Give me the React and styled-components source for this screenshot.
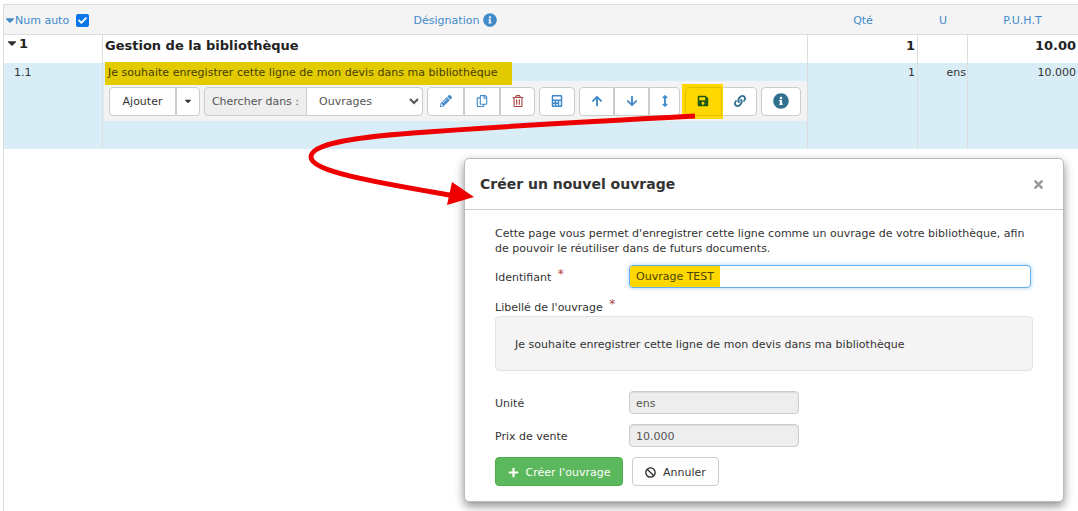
import React from "react";
import styled, { createGlobalStyle } from "styled-components";
import {
  FaArrowDown,
  FaArrowUp,
  FaArrowsAltV,
  FaBan,
  FaCalculator,
  FaCaretDown,
  FaCheck,
  FaInfoCircle,
  FaLink,
  FaPencilAlt,
  FaPlus,
  FaRegCopy,
  FaRegTrashAlt,
  FaSave,
  FaTimes
} from "react-icons/fa";

const GlobalStyle = createGlobalStyle`
  html, body {
    margin: 0;
    padding: 0;
    background: #fff;
    overflow: hidden;
  }
  body {
    font-family: "DejaVu Sans", Verdana, sans-serif;
    font-size: 11px;
    color: #333;
  }
  * {
    box-sizing: border-box;
  }
`;

const Page = styled.div`
  position: relative;
  width: 1078px;
  height: 511px;
  padding: 4px 0 0 3px;
  overflow: hidden;
`;

const Table = styled.div`
  width: 1075px;
  height: 507px;
  border-left: 1px solid #ddd;
  border-top: 1px solid #ddd;
`;

const Row = styled.div`
  display: grid;
  grid-template-columns: 99px 705px 110px 50px 109px;
  height: ${(p) => p.$height}px;
  background: ${(p) => p.$bg || "#fff"};
  border-bottom: ${(p) => (p.$line ? "1px solid #ddd" : "0")};
`;

const HeadCell = styled.div`
  display: flex;
  align-items: center;
  justify-content: ${(p) => p.$justify || "center"};
  gap: 4px;
  padding-top: 1px;
  color: #428bca;
  font-size: 11px;
`;

const Cell = styled.div`
  padding: ${(p) => p.$padding || "2px 1px 0 0"};
  text-align: ${(p) => p.$align || "right"};
  border-right: ${(p) => (p.$noLine ? "0" : "1px solid #ddd")};
  font-weight: ${(p) => (p.$bold ? 700 : 400)};
  font-size: ${(p) => (p.$bold ? "13px" : "11px")};
  color: ${(p) => (p.$bold ? "#222" : "#333")};
  min-width: 0;
`;

const Caret = styled.span`
  display: inline-flex;
  color: ${(p) => p.$color};
  font-size: ${(p) => p.$size || 12}px;
`;

const NumLabel = styled.span`
  display: flex;
  align-items: center;
  margin-left: -1px;
  ${Caret} {
    margin-right: -2px;
  }
`;

const NumberCell = styled(Cell)`
  display: flex;
  justify-content: flex-start;
  align-items: flex-start;
  padding: 1px 0 0 1px;
`;

const Checkbox = styled.span`
  display: inline-flex;
  align-items: center;
  justify-content: center;
  width: 13px;
  height: 13px;
  margin-left: 3px;
  border-radius: 2px;
  background: #0b76e8;
  color: #fff;
  font-size: 9px;
`;

const LineText = styled.mark`
  position: relative;
  z-index: 1;
  display: block;
  width: 407px;
  height: 23px;
  margin: -1px 0 0 2px;
  padding: 4px 0 0 3px;
  background: #e2cb00;
  color: #463c00;
  letter-spacing: 0.03px;
  white-space: nowrap;
`;

const Toolbar = styled.div`
  display: flex;
  align-items: center;
  height: 40px;
  margin: -4px 0 0 1px;
  padding: 0 5px;
  width: 703px;
  background: #f3f3f3;
  border-radius: 3px;
`;

const Group = styled.div`
  display: flex;
  height: 29px;
  margin-left: ${(p) => p.$gap || 0}px;
`;

const ToolButton = styled.button`
  position: relative;
  display: flex;
  align-items: center;
  justify-content: center;
  width: ${(p) => p.$width}px;
  height: 100%;
  padding: 0;
  background: #fff;
  border: 1px solid #ccc;
  color: ${(p) => p.$color || "#428bca"};
  font-family: inherit;
  font-size: ${(p) => p.$size || 12}px;
  &:first-child {
    border-radius: 4px 0 0 4px;
  }
  &:last-child {
    border-radius: 0 4px 4px 0;
  }
  &:only-child {
    border-radius: 4px;
  }
`;

const Highlight = styled.span`
  position: absolute;
  z-index: 1;
  inset: -4px -2px -4px -4px;
  background: #ffd800;
  display: flex;
  align-items: center;
  justify-content: center;
  color: #1d5a10;
  &::after {
    content: "";
    position: absolute;
    inset: 3px 1px 3px 3px;
    border: 1px solid #e0bf00;
    border-radius: 4px 0 0 4px;
  }
`;

const AddonLabel = styled.span`
  display: flex;
  align-items: center;
  justify-content: center;
  width: 103px;
  background: #eee;
  border: 1px solid #ccc;
  border-radius: 4px 0 0 4px;
  color: #555;
`;

const SearchSelect = styled.select`
  width: 117px;
  height: 100%;
  margin-left: -1px;
  padding: 0 0 0 8px;
  background: #fff;
  border: 1px solid #ccc;
  border-radius: 0 4px 4px 0;
  color: #555;
  font-family: inherit;
  font-size: 11px;
`;

const Arrow = styled.svg`
  position: absolute;
  top: 0;
  left: 0;
  z-index: 3;
  pointer-events: none;
`;

const Modal = styled.section`
  position: absolute;
  top: 158px;
  left: 464px;
  z-index: 2;
  width: 600px;
  height: 344px;
  background: #fff;
  border: 1px solid #bbb;
  border-radius: 5px;
  box-shadow: 0 4px 10px rgba(0, 0, 0, 0.45);
`;

const ModalHeader = styled.header`
  display: flex;
  align-items: center;
  justify-content: space-between;
  height: 51px;
  padding: 0 18px 0 15px;
  border-bottom: 1px solid #ccc;
`;

const ModalTitle = styled.h4`
  margin: 0;
  font-size: 14px;
  font-weight: 700;
  color: #333;
`;

const Close = styled.span`
  display: flex;
  color: #999;
  font-size: 13px;
`;

const ModalBody = styled.div`
  padding: 16px 30px 0;
`;

const Intro = styled.p`
  margin: 0 0 9px;
  line-height: 15px;
`;

const FormRow = styled.div`
  display: flex;
  align-items: center;
  height: ${(p) => p.$height || 23}px;
  margin-bottom: ${(p) => p.$mb || 0}px;
`;

const Label = styled.label`
  width: 134px;
  padding-top: 1px;
`;

const Star = styled.sup`
  position: relative;
  top: 2px;
  margin-left: 3px;
  color: #a94442;
  font-size: 12px;
  line-height: 0;
`;

const Field = styled.div`
  display: flex;
  align-items: center;
  width: ${(p) => p.$width}px;
  height: ${(p) => p.$height || 23}px;
  border: 1px solid ${(p) => (p.$focus ? "#66afe9" : "#ccc")};
  border-radius: 4px;
  background: ${(p) => (p.$focus ? "#fff" : "#eee")};
  box-shadow: ${(p) =>
    p.$focus ? "0 0 4px rgba(102, 175, 233, 0.6)" : "inset 0 1px 1px rgba(0,0,0,.08)"};
  padding: ${(p) => (p.$focus ? "0" : "1px 0 0 6px")};
  color: #555;
`;

const FieldMark = styled.span`
  display: flex;
  align-items: center;
  height: 100%;
  padding: 0 6px;
  min-width: 90px;
  background: #ffd800;
  border-radius: 3px 0 0 3px;
  color: #4b4300;
  white-space: nowrap;
`;

const StackLabel = styled.div`
  margin: 13px 0 -1px;
  height: 16px;
`;

const TextBlock = styled.div`
  display: flex;
  align-items: center;
  height: 55px;
  width: 538px;
  margin-bottom: 20px;
  padding: 1px 19px 0;
  background: #f4f4f4;
  border: 1px solid #e3e3e3;
  border-radius: 4px;
  letter-spacing: 0.03px;
`;

const Actions = styled.div`
  display: flex;
  gap: 9px;
  margin-top: 10px;
`;

const ActionButton = styled.button`
  display: flex;
  align-items: center;
  justify-content: center;
  gap: 7px;
  width: ${(p) => p.$width}px;
  height: 29px;
  padding: 1px 0 0;
  border: 1px solid ${(p) => (p.$primary ? "#4cae4c" : "#ccc")};
  border-radius: 4px;
  background: ${(p) => (p.$primary ? "#5cb85c" : "#fff")};
  color: ${(p) => (p.$primary ? "#fff" : "#333")};
  font-family: inherit;
  font-size: 11px;
`;

export default function App() {
  return (
    <Page>
      <GlobalStyle />
      <Table>
        <Row $height={30} $bg="#f4f4f4" $line>
          <HeadCell $justify="flex-start">
            <NumLabel>
              <Caret $color="#428bca" $size={14}>
                <FaCaretDown />
              </Caret>
              Num auto
            </NumLabel>
            <Checkbox>
              <FaCheck />
            </Checkbox>
          </HeadCell>
          <HeadCell>
            Désignation
            <Caret $color="#428bca" $size={14}>
              <FaInfoCircle />
            </Caret>
          </HeadCell>
          <HeadCell>Qté</HeadCell>
          <HeadCell>U</HeadCell>
          <HeadCell>P.U.H.T</HeadCell>
        </Row>
        <Row $height={28}>
          <NumberCell $bold>
            <Caret $color="#333" $size={14}>
              <FaCaretDown />
            </Caret>
            1
          </NumberCell>
          <Cell $bold $align="left" $padding="3px 0 0 2px">
            Gestion de la bibliothèque
          </Cell>
          <Cell $bold $padding="3px 2px 0 0">1</Cell>
          <Cell $bold />
          <Cell $bold $noLine $padding="3px 1px 0 0">10.00</Cell>
        </Row>
        <Row $height={86} $bg="#d9edf6">
          <Cell $align="left" $padding="3px 0 0 10px">1.1</Cell>
          <Cell $align="left" $padding="0">
            <LineText>Je souhaite enregistrer cette ligne de mon devis dans ma bibliothèque</LineText>
            <Toolbar>
              <Group>
                <ToolButton $width={67} $color="#333" $size={11}>Ajouter</ToolButton>
                <ToolButton $width={24} $color="#333" $size={10}>
                  <FaCaretDown />
                </ToolButton>
              </Group>
              <Group $gap={4}>
                <AddonLabel>Chercher dans :</AddonLabel>
                <SearchSelect defaultValue="Ouvrages">
                  <option>Ouvrages</option>
                </SearchSelect>
              </Group>
              <Group $gap={4}>
                <ToolButton $width={37}><FaPencilAlt /></ToolButton>
                <ToolButton $width={36}><FaRegCopy /></ToolButton>
                <ToolButton $width={35} $color="#a94442"><FaRegTrashAlt /></ToolButton>
              </Group>
              <Group $gap={4}>
                <ToolButton $width={36} $color="#428bca"><FaCalculator /></ToolButton>
              </Group>
              <Group $gap={4}>
                <ToolButton $width={35}><FaArrowUp /></ToolButton>
                <ToolButton $width={35}><FaArrowDown /></ToolButton>
                <ToolButton $width={31}><FaArrowsAltV /></ToolButton>
              </Group>
              <Group $gap={5}>
                <ToolButton $width={37}>
                  <Highlight><FaSave /></Highlight>
                </ToolButton>
                <ToolButton $width={35} $color="#31708f"><FaLink /></ToolButton>
              </Group>
              <Group $gap={4}>
                <ToolButton $width={40} $color="#31708f" $size={16}><FaInfoCircle /></ToolButton>
              </Group>
            </Toolbar>
          </Cell>
          <Cell $padding="3px 2px 0 0">1</Cell>
          <Cell $padding="3px 1px 0 0">ens</Cell>
          <Cell $noLine $padding="3px 1px 0 0">10.000</Cell>
        </Row>
      </Table>

      <Arrow width="1078" height="511" viewBox="0 0 1078 511">
        <path
          d="M695 116 C600 121 480 128 413 133 C360 137 311 143 311 157 C311 172 380 183 455 196"
          fill="none"
          stroke="#ee0000"
          strokeWidth="5"
        />
        <path d="M452 182 L474 197 L447 205 Z" fill="#ee0000" />
      </Arrow>

      <Modal>
        <ModalHeader>
          <ModalTitle>Créer un nouvel ouvrage</ModalTitle>
          <Close><FaTimes /></Close>
        </ModalHeader>
        <ModalBody>
          <Intro>
            Cette page vous permet d'enregistrer cette ligne comme un ouvrage de votre bibliothèque, afin
            de pouvoir le réutiliser dans de futurs documents.
          </Intro>
          <FormRow>
            <Label>Identifiant <Star>*</Star></Label>
            <Field $focus $width={402}>
              <FieldMark>Ouvrage TEST</FieldMark>
            </Field>
          </FormRow>
          <StackLabel>Libellé de l'ouvrage <Star>*</Star></StackLabel>
          <TextBlock>Je souhaite enregistrer cette ligne de mon devis dans ma bibliothèque</TextBlock>
          <FormRow $mb={10}>
            <Label>Unité</Label>
            <Field $width={170}>ens</Field>
          </FormRow>
          <FormRow>
            <Label>Prix de vente</Label>
            <Field $width={170}>10.000</Field>
          </FormRow>
          <Actions>
            <ActionButton $primary $width={128}>
              <FaPlus />
              Créer l'ouvrage
            </ActionButton>
            <ActionButton $width={87}>
              <FaBan />
              Annuler
            </ActionButton>
          </Actions>
        </ModalBody>
      </Modal>
    </Page>
  );
}
